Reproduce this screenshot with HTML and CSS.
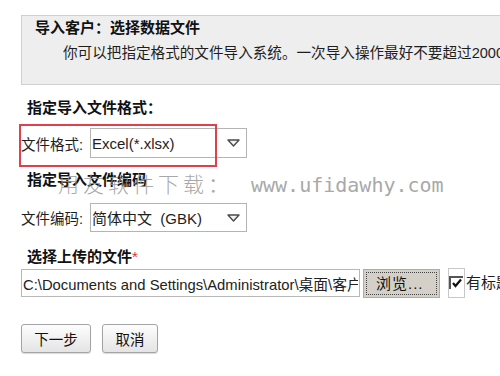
FILE: index.html
```html
<!DOCTYPE html>
<html lang="zh-CN">
<head>
  <meta charset="UTF-8" />
  <title>导入客户</title>
  <link rel="stylesheet" href="styles.css">
</head>
<body>
  <div class="page">
    <div class="intro">
      <h3>导入客户：选择数据文件</h3>
      <p>你可以把指定格式的文件导入系统。一次导入操作最好不要超过2000条记录。</p>
    </div>

    <div class="section format">
      <h4 class="section-title">指定导入文件格式：</h4>
      <div class="field">
        <label>文件格式:</label>
        <div class="select tall">
          <span>Excel(*.xlsx)</span>
          <svg class="arrow" width="13" height="8" viewBox="0 0 13 8"><path d="M1 1 H12 L6.5 7 Z" fill="#f4f4f4" stroke="#4a4a4a" stroke-width="1.4" stroke-linejoin="round"/></svg>
        </div>
      </div>
      <div class="mark"></div>
    </div>

    <div class="section encoding">
      <h4 class="section-title">指定导入文件编码</h4>
      <div class="field">
        <label>文件编码:</label>
        <div class="select">
          <span>简体中文&nbsp;&nbsp;(GBK)</span>
          <svg class="arrow" width="13" height="8" viewBox="0 0 13 8"><path d="M1 1 H12 L6.5 7 Z" fill="#f4f4f4" stroke="#4a4a4a" stroke-width="1.4" stroke-linejoin="round"/></svg>
        </div>
      </div>
    </div>

    <div class="section upload">
      <h4 class="section-title">选择上传的文件<span class="req">*</span></h4>
      <div class="file-row">
        <input class="file-path" type="text" readonly value="C:\Documents and Settings\Administrator\桌面\客户导入.xlsx">
        <button class="browse"><span>浏览...</span></button>
        <span class="check-wrap">
          <svg width="15" height="14" viewBox="0 0 15 14">
            <path d="M1 13 V1 H14" fill="none" stroke="#555" stroke-width="2"/>
            <path d="M4 7 L6.5 10 L12 3.5" fill="none" stroke="#111" stroke-width="2.2"/>
          </svg>
        </span>
        <span class="check-label">有标题行</span>
      </div>
    </div>

    <div class="actions">
      <button class="btn next">下一步</button>
      <button class="btn cancel">取消</button>
    </div>

    <div class="watermark">
      <span class="wm-cn">用友软件下载：</span>
      <span class="wm-url">www.ufidawhy.com</span>
    </div>
  </div>
</body>
</html>
```

FILE: styles.css
```css
* {
  box-sizing: border-box;
  margin: 0;
  padding: 0;
}

body {
  font-family: "Liberation Sans", "Noto Sans CJK SC", sans-serif;
  font-size: 14.5px;
  color: #1e1e1e;
  background: #fff;
  width: 500px;
  height: 376px;
  overflow: hidden;
}

.page {
  position: relative;
  padding: 15px 0 0 21px;
}

/* cabecera gris */
.intro {
  width: 560px;
  height: 70px;
  background: #eeeeee;
  border: 1px solid #d0d0d0;
  border-right: none;
}

.intro h3 {
  font-size: 15px;
  font-weight: 700;
  line-height: 20px;
  margin: 2px 0 0 13px;
  color: #111;
}

.intro p {
  font-size: 14.6px;
  line-height: 20px;
  margin: 5px 0 0 41px;
  white-space: nowrap;
}

.section {
  position: relative;
}

.section-title {
  font-size: 15px;
  font-weight: 700;
  line-height: 20px;
  padding-left: 6px;
  color: #111;
}

.format { margin-top: 13px; }
.encoding { margin-top: 12px; }
.upload { margin-top: 15px; }

.req {
  color: #e03030;
  font-weight: 400;
}

.field {
  display: flex;
  align-items: center;
  margin-top: 10px;
}

.encoding .field {
  margin-top: 13px;
}

.field label {
  width: 69px;
  white-space: nowrap;
}

.select {
  width: 157px;
  height: 29px;
  border: 1px solid #b4b4b4;
  background: #fff;
  display: flex;
  align-items: center;
  justify-content: space-between;
  padding: 0 6px 0 1px;
  font-size: 15px;
}

.select.tall {
  height: 30px;
}

.arrow {
  display: block;
}

/* recuadro rojo de anotación */
.mark {
  position: absolute;
  left: -2px;
  top: 26px;
  width: 198px;
  height: 43px;
  border: 2px solid #e0404c;
}

.file-row {
  display: flex;
  align-items: flex-start;
  margin-top: 2px;
  white-space: nowrap;
}

.file-row > * {
  flex-shrink: 0;
}

.file-path {
  width: 339px;
  height: 28px;
  border: 1px solid #b8b8b8;
  padding: 0 1px;
  font-family: "Liberation Sans", "Noto Sans CJK SC", sans-serif;
  font-size: 14.8px;
  color: #222;
  background: #fff;
  outline: none;
}

.browse {
  width: 77px;
  height: 29px;
  margin-left: 3px;
  background: #d4d0c8;
  border: 1px solid #b0aca4;
  padding: 2px;
  font-family: "Liberation Sans", "Noto Sans CJK SC", sans-serif;
  font-size: 15px;
  color: #111;
}

.browse span {
  display: block;
  height: 100%;
  border: 1px dotted #444;
  line-height: 21px;
  text-align: left;
  padding-left: 9px;
  letter-spacing: 1px;
}

.check-wrap {
  width: 17px;
  height: 30px;
  margin: -1px 0 0 8px;
  border: 1px solid #c8c8c8;
  display: flex;
  align-items: center;
  justify-content: center;
}

.check-label {
  margin-left: 1px;
  font-size: 15px;
  line-height: 28px;
}

.actions {
  display: flex;
  gap: 11px;
  margin-top: 26px;
}

.btn {
  height: 29px;
  border: 1px solid #a4a4a4;
  border-radius: 3px;
  background: linear-gradient(#fdfdfd, #e4e4e4);
  box-shadow: 0 1px 1px rgba(0, 0, 0, 0.15);
  font-family: "Liberation Sans", "Noto Sans CJK SC", sans-serif;
  font-size: 14.5px;
  color: #111;
}

.btn.next { width: 70px; }
.btn.cancel { width: 56px; }

/* marca de agua */
.watermark {
  position: absolute;
  left: 58px;
  top: 168px;
  display: flex;
  align-items: baseline;
  color: #9a9a9a;
  opacity: 0.85;
  pointer-events: none;
  white-space: nowrap;
}

.wm-cn {
  font-size: 21px;
  font-weight: 300;
  letter-spacing: 4px;
}

.wm-url {
  margin-left: 18px;
  font-family: "DejaVu Sans Mono", monospace;
  font-size: 20px;
}
```
